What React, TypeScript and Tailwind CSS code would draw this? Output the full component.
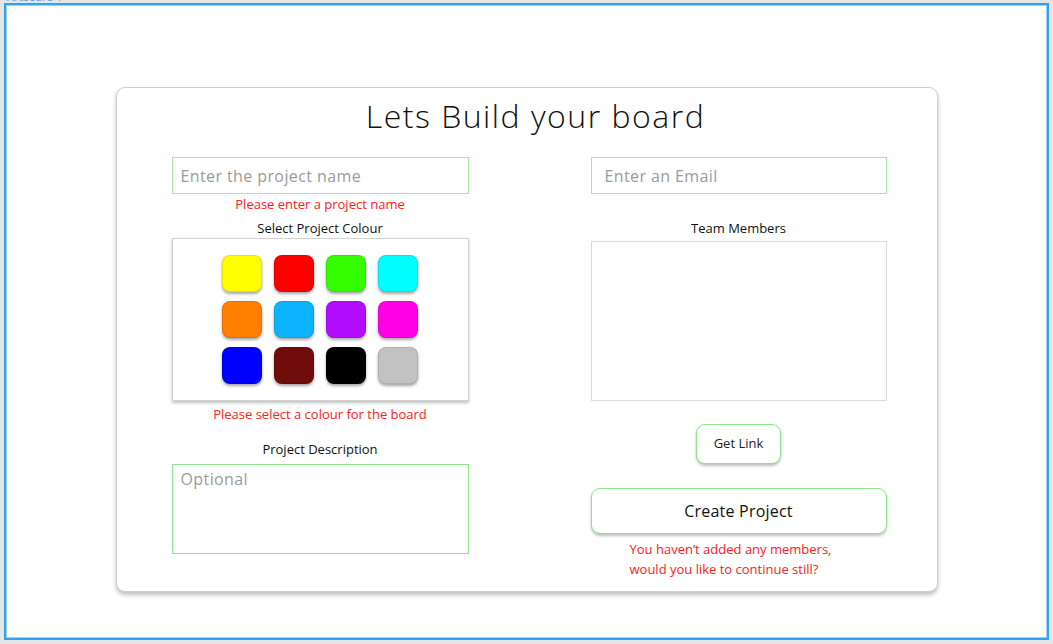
import React from 'react'

const swatches = [
  '#ffff00', '#ff0000', '#33ff00', '#00ffff',
  '#ff7f00', '#0cb3ff', '#b20cff', '#ff00e6',
  '#0000ff', '#710c0c', '#000000', '#c2c2c2',
]

const font = { fontFamily: '"Open Sans", "DejaVu Sans", sans-serif' }

export default function App() {
  return (
    <div className="w-[1053px] h-[644px] bg-[#e5e5e5] overflow-hidden relative" style={font}>
      <div className="absolute left-[7px] top-[-9px] text-[11px] text-[#2ea3f5] leading-[12px]">Artboard 1</div>
      <div className="absolute left-[4px] top-[3px] w-[1045px] h-[637px] border-2 border-[#2ea3f5] bg-white">
        <div className="w-full h-full border border-[#9dd3fa] flex justify-center">
          <div className="mt-[81px] w-[822px] h-[505px] bg-white border border-[#d0d0d0] rounded-[9px] shadow-[0_3px_4px_rgba(0,0,0,0.25)] flex flex-col items-center">
            <h1 className="mt-[8px] ml-[18px] text-[32px] leading-[40px] font-light tracking-[1.5px] text-[#111]">Lets Build your board</h1>
            <div className="mt-[21px] w-full flex pl-[55px] gap-[122px]">
              {/* left column */}
              <div className="w-[297px] flex flex-col items-center">
                <div className="w-full h-[37px] border border-[#a7e9a1] flex items-center pl-[8px] text-[16px] tracking-[0.4px] text-[#9b9b9b]">
                  Enter the project name
                </div>
                <p className="text-[13px] leading-[20px] text-[#ff2020]">Please enter a project name</p>
                <p className="mt-[4px] text-[13px] leading-[20px] text-[#111]">Select Project Colour</p>
                <div className="w-full h-[163px] border border-[#d3d3d3] shadow-[0_2px_3px_rgba(0,0,0,0.25)] pt-[16px] flex justify-center">
                  <div className="grid grid-cols-4 gap-x-[12px] gap-y-[9px] h-fit">
                    {swatches.map((c) => (
                      <div
                        key={c}
                        className="w-[40px] h-[37px] rounded-[8px] border border-black/10 shadow-[0_2px_3px_rgba(0,0,0,0.35)]"
                        style={{ backgroundColor: c }}
                      />
                    ))}
                  </div>
                </div>
                <p className="mt-[3px] text-[13px] leading-[20px] text-[#ff2020]">Please select a colour for the board</p>
                <p className="mt-[15px] text-[13px] leading-[20px] text-[#111]">Project Description</p>
                <div className="mt-[5px] w-full h-[90px] border border-[#8fe38a] pl-[8px] pt-[3px] text-[16px] leading-[22px] tracking-[0.4px] text-[#9b9b9b]">
                  Optional
                </div>
              </div>
              {/* right column */}
              <div className="w-[296px] flex flex-col items-center">
                <div className="w-full h-[37px] border border-[#a7e9a1] flex items-center pl-[13px] text-[16px] tracking-[0.4px] text-[#9b9b9b]">
                  Enter an Email
                </div>
                <p className="mt-[24px] text-[13px] leading-[20px] text-[#111]">Team Members</p>
                <div className="mt-[3px] w-full h-[160px] border border-[#dcdcdc]" />
                <button className="mt-[23px] w-[85px] h-[40px] rounded-[9px] border border-[#8fe38a] bg-white shadow-[0_2px_3px_rgba(0,0,0,0.25)] text-[13px] text-[#222]">
                  Get Link
                </button>
                <button className="mt-[24px] w-full h-[46px] rounded-[9px] border border-[#8fe38a] bg-white shadow-[0_2px_3px_rgba(0,0,0,0.25)] text-[16px] tracking-[0.2px] text-[#111]">
                  Create Project
                </button>
                <div className="mt-[5px] w-full pl-[39px] text-[13px] leading-[20px] text-[#ff2020]">
                  <p>You haven’t added any members,</p>
                  <p>would you like to continue still?</p>
                </div>
              </div>
            </div>
          </div>
        </div>
      </div>
    </div>
  )
}
